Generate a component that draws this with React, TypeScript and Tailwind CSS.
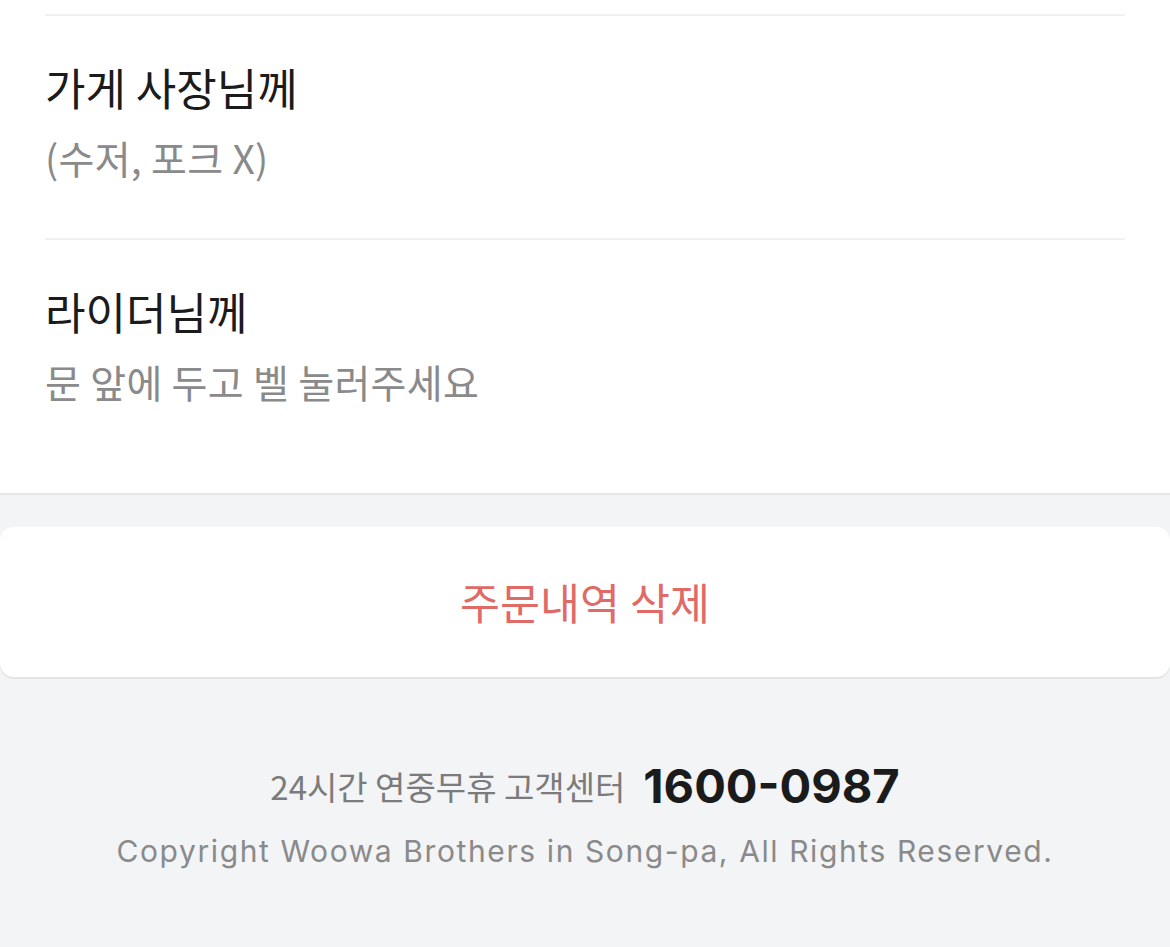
const kr = "font-['Noto_Sans_CJK_KR','Noto_Sans',sans-serif]";

const requests = [
  { to: "가게 사장님께", note: "(수저, 포크 X)" },
  { to: "라이더님께", note: "문 앞에 두고 벨 눌러주세요" },
];

export default function App() {
  return (
    <div className={`min-h-[947px] bg-[#f3f4f6] ${kr}`}>
      <section className="border-b-2 border-[#e5e6e8] bg-white px-[45px] pt-[14px] pb-[31px]">
        {requests.map((item) => (
          <div key={item.to} className="border-t-2 border-[#f1f1f1] pt-[47px] pb-[59px]">
            <div className="text-[44px] leading-[48px] text-[#1b1b1b]">{item.to}</div>
            <div className="mt-[24px] text-[39px] leading-[44px] tracking-[0.3px] text-[#8a8a8a]">
              {item.note}
            </div>
          </div>
        ))}
      </section>

      <div className="pt-[32px]">
        <button className="flex h-[150px] w-full items-center justify-center rounded-[14px] bg-white shadow-[0_2px_0_#e3e4e6]">
          <span className="text-[43.5px] leading-[50px] text-[#e06a66]">주문내역 삭제</span>
        </button>
      </div>

      <footer className="flex flex-col items-center pt-[81px]">
        <div className="flex h-[56px] items-center gap-[18px]">
          <span className="text-[33px] leading-[40px] text-[#7b7b7b]">24시간 연중무휴 고객센터</span>
          <span className="font-['Inter',sans-serif] text-[47px] leading-[56px] font-bold text-[#1b1b1b]">1600-0987</span>
        </div>
        <div className="mt-[17px] font-['Inter',sans-serif] text-[30px] leading-[40px] tracking-[1.6px] text-[#8a8a8a]">
          Copyright Woowa Brothers in Song-pa, All Rights Reserved.
        </div>
      </footer>
    </div>
  );
}
